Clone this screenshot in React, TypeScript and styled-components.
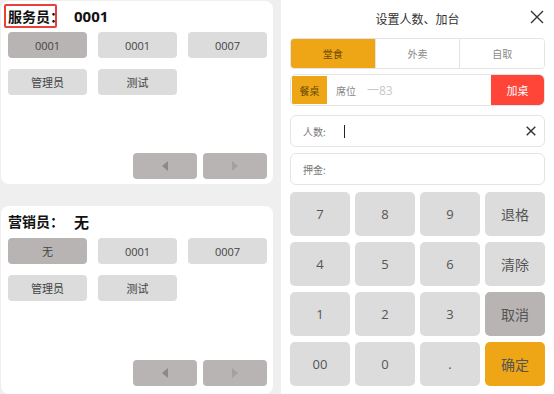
import styled, { createGlobalStyle } from "styled-components";

const GlobalStyle = createGlobalStyle`
    html, body {
        margin:0;
        padding:0;
        background:#efefef;
        font-family:"Open Sans","Noto Sans CJK SC",sans-serif;
    }
`;

const Page = styled.div`
    width:554px;
    height:394px;
    display:flex;
    overflow:hidden;
`;
const LeftCol = styled.div`
    width:273px;
    padding:1px 0 0 1px;
    display:flex;
    flex-direction:column;
    gap:22px;
`;
const Card = styled.div<{ h: number; pb: number }>`
    height:${(p) => p.h}px;
    background:#fff;
    border-radius:8px;
    box-sizing:border-box;
    padding:3px 6px ${(p) => p.pb}px 6px;
    display:flex;
    flex-direction:column;
`;
const TitleRow = styled.div`
    display:flex;
    align-items:center;
    height:24px;
    font-family:"Noto Sans CJK SC",sans-serif;
    font-weight:bold;
    font-size:14px;
    color:#111;
    white-space:nowrap;
`;
const Label = styled.span<{ boxed?: boolean }>`
    box-sizing:border-box;
    height:24px;
    line-height:20px;
    padding:0 0 0 2px;
    margin-left:-3px;
    border:2px solid ${(p) => (p.boxed ? "#e8403a" : "transparent")};
    border-radius:2px;
    width:53px;
    overflow:visible;
    white-space:nowrap;
`;
const Value = styled.span`
    margin-left:17px;
    font-family:"Open Sans","Noto Sans CJK SC",sans-serif;
    font-weight:bold;
    font-size:15px;
`;
const Grid = styled.div<{ mt: number }>`
    display:grid;
    grid-template-columns:repeat(3, 79px);
    column-gap:11px;
    row-gap:11px;
    margin-top:${(p) => p.mt}px;
    padding-left:1px;
`;
const Choice = styled.div<{ active?: boolean }>`
    height:26px;
    border-radius:4px;
    background:${(p) => (p.active ? "#b8b4b3" : "#dcdcdc")};
    display:flex;
    align-items:center;
    justify-content:center;
    font-size:11px;
    color:#444;
    font-family:"Open Sans","Noto Sans CJK SC",sans-serif;
`;
const Pager = styled.div`
    margin-top:auto;
    display:flex;
    justify-content:flex-end;
    gap:6px;
`;
const PageBtn = styled.div`
    width:64px;
    height:26px;
    border-radius:4px;
    background:#b8b4b3;
    display:flex;
    align-items:center;
    justify-content:center;
`;

const RightPanel = styled.div`
    margin-left:8px;
    width:273px;
    background:#fff;
    box-sizing:border-box;
    padding:0 9px 0 9px;
    display:flex;
    flex-direction:column;
    position:relative;
`;
const Header = styled.div`
    height:38px;
    display:flex;
    align-items:center;
    justify-content:center;
    font-family:"Noto Sans CJK SC",sans-serif;
    font-size:12px;
    color:#333;
    padding-bottom:2px;
    box-sizing:border-box;
`;
const Close = styled.div`
    position:absolute;
    right:10px;
    top:7px;
    width:14px;
    height:14px;
`;
const Tabs = styled.div`
    display:flex;
    height:31px;
    box-sizing:border-box;
    border:1px solid #e4e4e4;
    border-radius:4px;
    overflow:hidden;
`;
const Tab = styled.div<{ active?: boolean }>`
    flex:1;
    display:flex;
    align-items:center;
    justify-content:center;
    font-family:"Noto Sans CJK SC",sans-serif;
    font-size:10px;
    color:${(p) => (p.active ? "#6b4a06" : "#888")};
    background:${(p) => (p.active ? "#eea616" : "#fff")};
    & + & {
        border-left:1px solid #e4e4e4;
    }
`;
const TableRow = styled.div`
    margin-top:5px;
    height:32px;
    box-sizing:border-box;
    border:1px solid #e4e4e4;
    border-radius:6px;
    display:flex;
    align-items:stretch;
    overflow:hidden;
    font-family:"Noto Sans CJK SC",sans-serif;
    font-size:10px;
`;
const TableTag = styled.div`
    width:35px;
    margin:1px 0 1px 1px;
    background:#eea616;
    color:#6b4a06;
    display:flex;
    align-items:center;
    justify-content:center;
`;
const Seat = styled.div`
    color:#888;
    display:flex;
    align-items:center;
    margin-left:9px;
`;
const SeatNo = styled.div`
    color:#c8c8c8;
    display:flex;
    align-items:center;
    margin-left:11px;
    font-family:"Open Sans","Noto Sans CJK SC",sans-serif;
    font-size:12px;
`;
const AddBtn = styled.div`
    margin-left:auto;
    width:53px;
    background:#ff4438;
    color:#fff;
    display:flex;
    align-items:center;
    justify-content:center;
    font-size:11px;
`;
const Field = styled.div<{ mt: number }>`
    margin-top:${(p) => p.mt}px;
    height:32px;
    box-sizing:border-box;
    border:1px solid #e4e4e4;
    border-radius:6px;
    display:flex;
    align-items:center;
    padding:0 8px 0 12px;
    font-family:"Noto Sans CJK SC",sans-serif;
    font-size:10px;
    color:#777;
`;
const Caret = styled.span`
    width:1px;
    height:13px;
    background:#222;
    margin-left:18px;
`;
const Clear = styled.div`
    margin-left:auto;
    width:10px;
    height:10px;
    display:flex;
`;
const Keypad = styled.div`
    margin-top:7px;
    display:grid;
    grid-template-columns:repeat(4, 60px);
    grid-auto-rows:44px;
    column-gap:5px;
    row-gap:6px;
`;
const Key = styled.div<{ tone?: "gray" | "dark" | "orange"; cn?: boolean }>`
    border-radius:5px;
    background:${(p) => (p.tone === "dark" ? "#b8b4b3" : p.tone === "orange" ? "#eea616" : "#dcdcdc")};
    display:flex;
    align-items:center;
    justify-content:center;
    color:#555;
    font-family:"Open Sans","Noto Sans CJK SC",sans-serif;
    font-size:${(p) => (p.cn ? 14 : 13)}px;
`;

const Arrow = ({ left }: { left?: boolean }) => (
    <svg width="6" height="10" viewBox="0 0 6 10">
        <path d={left ? "M6 0 L0 5 L6 10 Z" : "M0 0 L6 5 L0 10 Z"} fill={left ? "#8c8988" : "#a3a09f"} />
    </svg>
);

const Cross = ({ size, w }: { size: number; w: number }) => (
    <svg width={size} height={size} viewBox="0 0 14 14">
        <path d="M1 1 L13 13 M13 1 L1 13" stroke="#333" strokeWidth={w} />
    </svg>
);

const people = ["管理员", "测试"];

const App = () => {
    const keys: { t: string; tone?: "gray" | "dark" | "orange"; cn?: boolean }[] = [
        { t: "7" }, { t: "8" }, { t: "9" }, { t: "退格", cn: true },
        { t: "4" }, { t: "5" }, { t: "6" }, { t: "清除", cn: true },
        { t: "1" }, { t: "2" }, { t: "3" }, { t: "取消", cn: true, tone: "dark" },
        { t: "00" }, { t: "0" }, { t: "." }, { t: "确定", cn: true, tone: "orange" },
    ];
    return (
        <Page>
            <GlobalStyle />
            <LeftCol>
                <Card h={183} pb={5}>
                    <TitleRow>
                        <Label boxed>服务员：</Label>
                        <Value>0001</Value>
                    </TitleRow>
                    <Grid mt={4}>
                        <Choice active>0001</Choice>
                        <Choice>0001</Choice>
                        <Choice>0007</Choice>
                        {people.map((p) => <Choice key={p}>{p}</Choice>)}
                    </Grid>
                    <Pager>
                        <PageBtn><Arrow left /></PageBtn>
                        <PageBtn><Arrow /></PageBtn>
                    </Pager>
                </Card>
                <Card h={188} pb={8}>
                    <TitleRow>
                        <Label>营销员：</Label>
                        <Value>无</Value>
                    </TitleRow>
                    <Grid mt={5}>
                        <Choice active>无</Choice>
                        <Choice>0001</Choice>
                        <Choice>0007</Choice>
                        {people.map((p) => <Choice key={p}>{p}</Choice>)}
                    </Grid>
                    <Pager>
                        <PageBtn><Arrow left /></PageBtn>
                        <PageBtn><Arrow /></PageBtn>
                    </Pager>
                </Card>
            </LeftCol>
            <RightPanel>
                <Header>设置人数、加台</Header>
                <Close><Cross size={14} w={1.4} /></Close>
                <Tabs>
                    <Tab active>堂食</Tab>
                    <Tab>外卖</Tab>
                    <Tab>自取</Tab>
                </Tabs>
                <TableRow>
                    <TableTag>餐桌</TableTag>
                    <Seat>席位</Seat>
                    <SeatNo>一83</SeatNo>
                    <AddBtn>加桌</AddBtn>
                </TableRow>
                <Field mt={9}>
                    人数:
                    <Caret />
                    <Clear><Cross size={10} w={2} /></Clear>
                </Field>
                <Field mt={6}>押金:</Field>
                <Keypad>
                    {keys.map((k) => (
                        <Key key={k.t} tone={k.tone} cn={k.cn}>{k.t}</Key>
                    ))}
                </Keypad>
            </RightPanel>
        </Page>
    );
};

export default App;
